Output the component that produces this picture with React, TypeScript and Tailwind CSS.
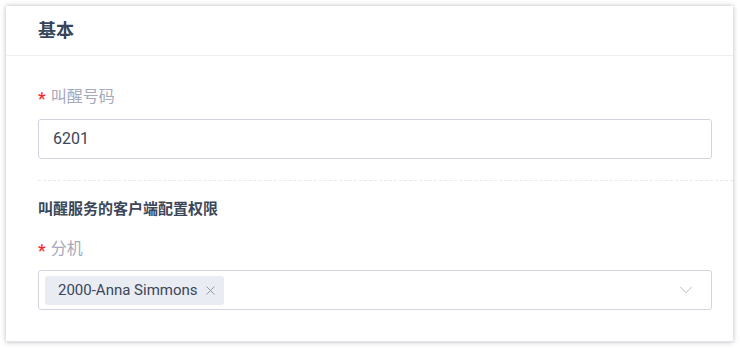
import { X, ChevronDown } from "lucide-react";

function Label({ text }: { text: string }) {
  return (
    <div className="flex h-[22px] items-center text-[16px] leading-[22px] text-[#a7a9bc]">
      <span className="mr-[5px] translate-y-[2px] text-[18px] text-[#f5222d]">*</span>
      {text}
    </div>
  );
}

export default function App() {
  return (
    <div
      className="h-[348px] w-[740px] bg-white pl-[6px] pr-[7px] pt-[6px]"
      style={{ fontFamily: 'Roboto, "Noto Sans CJK SC", sans-serif' }}
    >
      <div className="h-[336px] bg-white shadow-[0_0_5px_rgba(0,0,0,0.28)] border-b border-[#e2e1ec]">
        <div className="flex h-[50px] items-center border-b border-[#efeff3] pl-[32px] text-[18px] font-bold text-[#37455a]">
          基本
        </div>
        <div className="pl-[32px] pt-[30px]">
          <div className="pr-[21px]">
            <Label text="叫醒号码" />
            <div className="mt-[11px] flex h-[40px] items-center rounded-[3px] border border-[#d5d3e2] px-[14px] text-[16px] text-[#3b4658]">
              6201
            </div>
          </div>
          <div className="mt-[21px] border-t border-dashed border-[#e8e8ee]" />
          <div className="pr-[21px]">
            <div className="mt-[17px] text-[15px] font-bold leading-[22px] text-[#3b4658]">
              叫醒服务的客户端配置权限
            </div>
            <div className="mt-[18px]">
              <Label text="分机" />
            </div>
            <div className="mt-[10px] flex h-[40px] items-center justify-between rounded-[3px] border border-[#d5d3e2] pl-[6px] pr-[14px]">
              <div className="flex h-[29px] items-center gap-[5px] rounded-[3px] bg-[#e9ecf3] pl-[13px] pr-[6px] text-[15px] text-[#3b4658]">
                2000-Anna Simmons
                <X className="h-[15px] w-[15px] text-[#8a8d99]" strokeWidth={1.4} />
              </div>
              <ChevronDown className="h-[22px] w-[22px] text-[#b8b8c2]" strokeWidth={1} />
            </div>
          </div>
        </div>
      </div>
    </div>
  );
}
